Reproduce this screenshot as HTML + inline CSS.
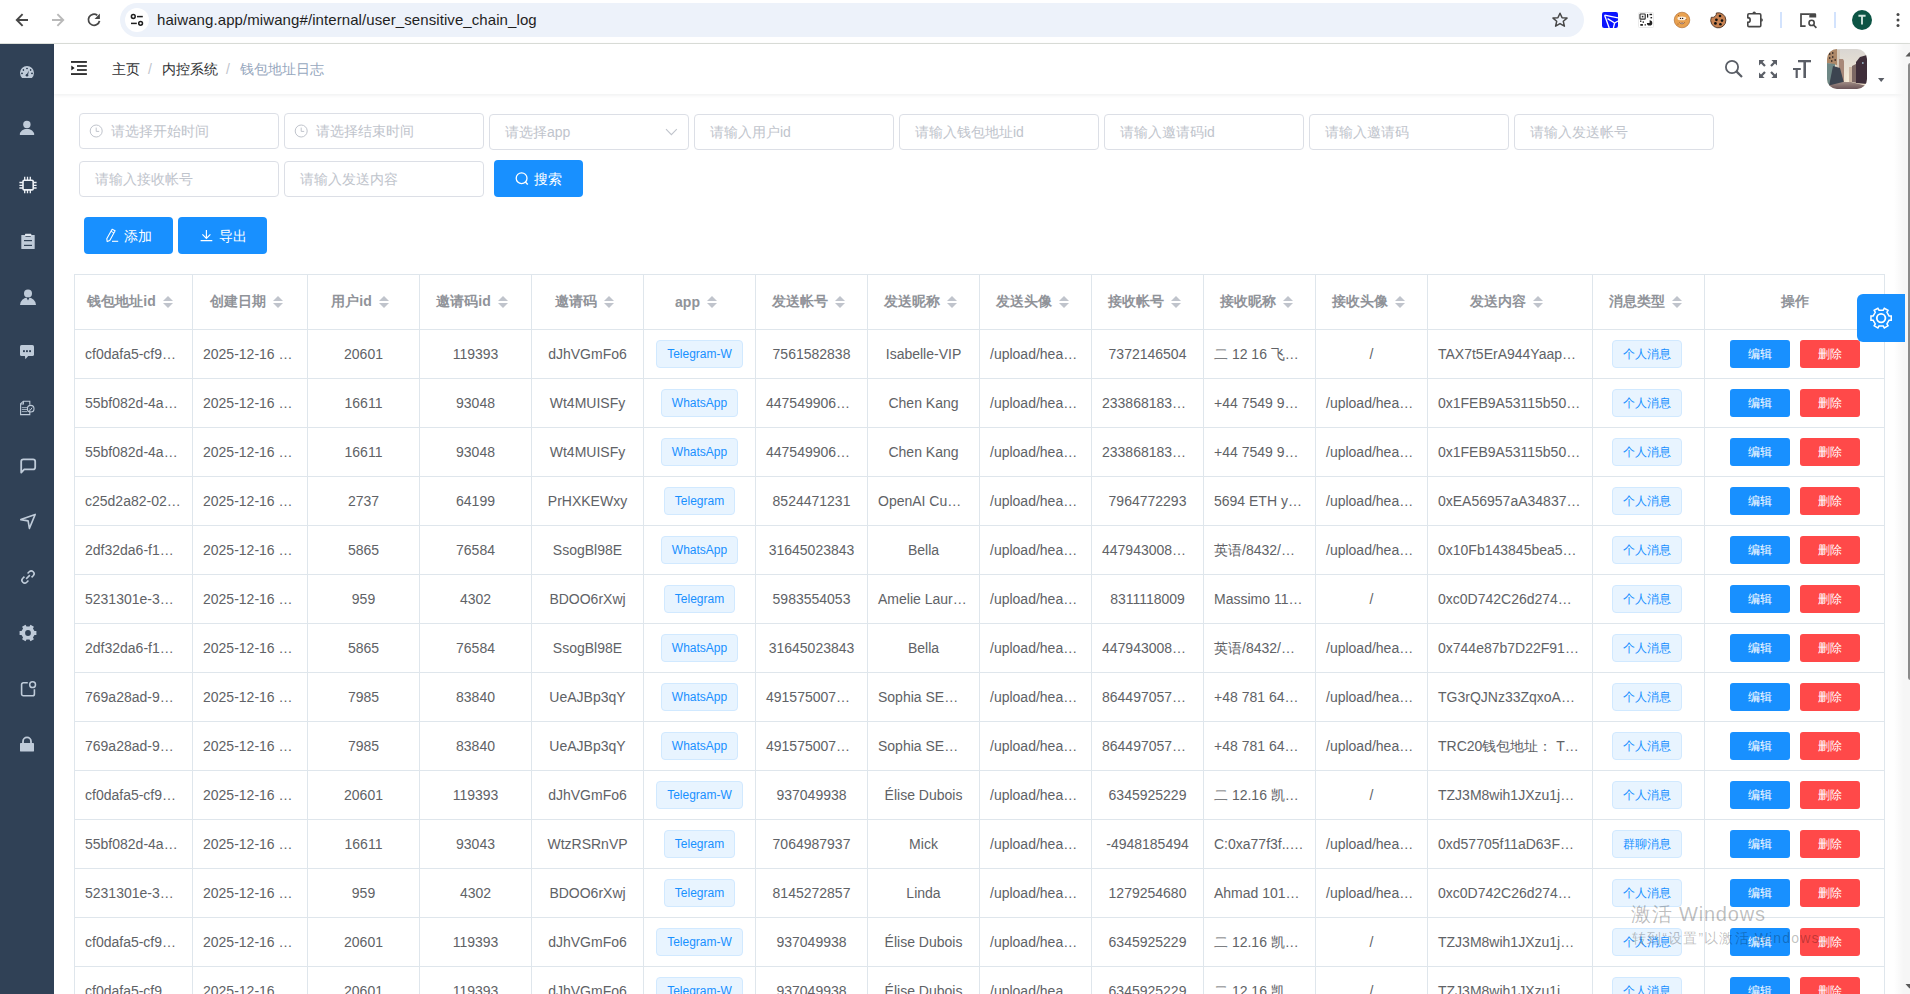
<!DOCTYPE html>
<html><head><meta charset="utf-8">
<style>
*{box-sizing:border-box;margin:0;padding:0}
html,body{width:1910px;height:994px;overflow:hidden;background:#fff}
body{position:relative;font-family:"Liberation Sans",sans-serif;color:#606266;font-size:14px}
.abs{position:absolute}
/* browser chrome */
#chrome{position:absolute;left:0;top:0;width:1910px;height:44px;background:#fff;border-bottom:1px solid #dcdfda}
#omni{position:absolute;left:120px;top:3px;width:1464px;height:34px;border-radius:17px;background:#edf2fa}
#siteic{position:absolute;left:125px;top:8px;width:24px;height:24px;border-radius:12px;background:#fff}
#url{position:absolute;left:157px;top:10px;font-size:15px;color:#1f1f1f;white-space:nowrap;line-height:20px;letter-spacing:0.085px}
/* sidebar */
#side{position:absolute;left:0;top:44px;width:54px;height:950px;background:#304156}
.sic{position:absolute;left:19px;width:16px;height:16px}
/* navbar */
#nav{position:absolute;left:54px;top:44px;width:1856px;height:50px;background:#fff;box-shadow:0 1px 4px rgba(0,21,41,.08)}
.bc{position:absolute;top:60px;font-size:14px;line-height:18px;white-space:nowrap}
/* form */
.inp{position:absolute;width:200px;height:36px;border:1px solid #dcdfe6;border-radius:4px;background:#fff;font-size:14px;font-weight:500;color:#c0c4cc;line-height:34px;padding-left:15px;white-space:nowrap}
.btn{position:absolute;height:36px;background:#1890ff;border-radius:4px;color:#fff;font-size:14px;line-height:36px;white-space:nowrap}
/* table */
.vl{position:absolute;width:1px;background:#dfe6ec}
.hl{position:absolute;height:1px;background:#dfe6ec}
.th{position:absolute;display:flex;align-items:center;justify-content:center;font-weight:bold;color:#909399;font-size:14px;white-space:nowrap;overflow:hidden}
.td{position:absolute;display:flex;align-items:center;justify-content:center;font-size:14px;line-height:23px;color:#606266;white-space:nowrap;overflow:hidden;padding:0 10px}
.td.tl{justify-content:flex-start}
.wm{position:absolute;color:rgba(0,0,0,.26);white-space:nowrap;pointer-events:none}
#avatar{position:absolute;left:1827px;top:49px;width:40px;height:40px;border-radius:10px;overflow:hidden}
.caret{display:inline-block;position:relative;width:24px;height:20px;vertical-align:middle}
.caret i{position:absolute;left:7px;width:0;height:0;border:5px solid transparent}
.caret i.up{top:-1px;border-bottom-color:#c0c4cc}
.caret i.dn{top:11px;border-top-color:#c0c4cc}
.tag{display:inline-block;height:28px;line-height:26px;padding:0 10px;font-size:12px;color:#1890ff;background:#e8f4ff;border:1px solid #d1e9ff;border-radius:4px}
.bt{display:inline-block;width:60px;height:28px;line-height:29px;text-align:center;font-size:12px;font-weight:500;color:#fff;border-radius:3px}
.bl{background:#1890ff;margin-right:10px}
.br{background:#ff4949}
#gear{position:absolute;left:1857px;top:294px;width:48px;height:48px;background:#1890ff;border-radius:6px 0 0 6px}
#track{position:absolute;left:1894px;top:44px;width:16px;height:950px;background:linear-gradient(90deg,rgba(248,248,248,0),#f6f6f6 60%)}
#thumb{position:absolute;left:1908px;top:63px;width:5px;height:617px;background:#8a8a8a;border-radius:3px}
</style></head><body>

<div id="chrome">
  <div id="omni"></div>
  <div id="siteic"></div>
  <div id="url">haiwang.app/miwang#/internal/user_sensitive_chain_log</div>
</div>

<div id="side"></div>

<div id="nav"></div>
<div class="bc" style="left:112px;color:#303133">主页</div>
<div class="bc" style="left:148px;color:#c0c4cc">/</div>
<div class="bc" style="left:162px;color:#303133">内控系统</div>
<div class="bc" style="left:226px;color:#c0c4cc">/</div>
<div class="bc" style="left:240px;color:#97a8be">钱包地址日志</div>

<div class="inp" style="left:79px;top:113px;padding-left:31px">请选择开始时间</div>
<div class="inp" style="left:284px;top:113px;padding-left:31px">请选择结束时间</div>
<div class="inp" style="left:489px;top:114px">请选择app</div>
<div class="inp" style="left:694px;top:114px">请输入用户id</div>
<div class="inp" style="left:899px;top:114px">请输入钱包地址id</div>
<div class="inp" style="left:1104px;top:114px">请输入邀请码id</div>
<div class="inp" style="left:1309px;top:114px">请输入邀请码</div>
<div class="inp" style="left:1514px;top:114px">请输入发送帐号</div>
<div class="inp" style="left:79px;top:161px">请输入接收帐号</div>
<div class="inp" style="left:284px;top:161px">请输入发送内容</div>
<div class="btn" style="left:494px;top:160px;height:37px;line-height:36px;padding-top:1px;width:89px;padding-left:40px">搜索</div>
<div class="btn" style="left:84px;top:217px;height:37px;line-height:36px;padding-top:1px;width:89px;padding-left:40px">添加</div>
<div class="btn" style="left:178px;top:217px;height:37px;line-height:36px;padding-top:1px;width:89px;padding-left:41px">导出</div>

<div class="vl" style="left:74px;top:274px;height:720px"></div>
<div class="vl" style="left:192px;top:274px;height:720px"></div>
<div class="vl" style="left:307px;top:274px;height:720px"></div>
<div class="vl" style="left:419px;top:274px;height:720px"></div>
<div class="vl" style="left:531px;top:274px;height:720px"></div>
<div class="vl" style="left:643px;top:274px;height:720px"></div>
<div class="vl" style="left:755px;top:274px;height:720px"></div>
<div class="vl" style="left:867px;top:274px;height:720px"></div>
<div class="vl" style="left:979px;top:274px;height:720px"></div>
<div class="vl" style="left:1091px;top:274px;height:720px"></div>
<div class="vl" style="left:1203px;top:274px;height:720px"></div>
<div class="vl" style="left:1315px;top:274px;height:720px"></div>
<div class="vl" style="left:1427px;top:274px;height:720px"></div>
<div class="vl" style="left:1592px;top:274px;height:720px"></div>
<div class="vl" style="left:1704px;top:274px;height:720px"></div>
<div class="vl" style="left:1884px;top:274px;height:720px"></div>
<div class="hl" style="left:74px;top:274px;width:1811px"></div>
<div class="hl" style="left:74px;top:329px;width:1811px"></div>
<div class="hl" style="left:74px;top:378px;width:1811px"></div>
<div class="hl" style="left:74px;top:427px;width:1811px"></div>
<div class="hl" style="left:74px;top:476px;width:1811px"></div>
<div class="hl" style="left:74px;top:525px;width:1811px"></div>
<div class="hl" style="left:74px;top:574px;width:1811px"></div>
<div class="hl" style="left:74px;top:623px;width:1811px"></div>
<div class="hl" style="left:74px;top:672px;width:1811px"></div>
<div class="hl" style="left:74px;top:721px;width:1811px"></div>
<div class="hl" style="left:74px;top:770px;width:1811px"></div>
<div class="hl" style="left:74px;top:819px;width:1811px"></div>
<div class="hl" style="left:74px;top:868px;width:1811px"></div>
<div class="hl" style="left:74px;top:917px;width:1811px"></div>
<div class="hl" style="left:74px;top:966px;width:1811px"></div>
<div class="th" style="left:75px;top:275px;width:117px;height:54px">钱包地址id<span class="caret"><i class="up"></i><i class="dn"></i></span></div>
<div class="th" style="left:193px;top:275px;width:114px;height:54px">创建日期<span class="caret"><i class="up"></i><i class="dn"></i></span></div>
<div class="th" style="left:308px;top:275px;width:111px;height:54px">用户id<span class="caret"><i class="up"></i><i class="dn"></i></span></div>
<div class="th" style="left:420px;top:275px;width:111px;height:54px">邀请码id<span class="caret"><i class="up"></i><i class="dn"></i></span></div>
<div class="th" style="left:532px;top:275px;width:111px;height:54px">邀请码<span class="caret"><i class="up"></i><i class="dn"></i></span></div>
<div class="th" style="left:644px;top:275px;width:111px;height:54px">app<span class="caret"><i class="up"></i><i class="dn"></i></span></div>
<div class="th" style="left:756px;top:275px;width:111px;height:54px">发送帐号<span class="caret"><i class="up"></i><i class="dn"></i></span></div>
<div class="th" style="left:868px;top:275px;width:111px;height:54px">发送昵称<span class="caret"><i class="up"></i><i class="dn"></i></span></div>
<div class="th" style="left:980px;top:275px;width:111px;height:54px">发送头像<span class="caret"><i class="up"></i><i class="dn"></i></span></div>
<div class="th" style="left:1092px;top:275px;width:111px;height:54px">接收帐号<span class="caret"><i class="up"></i><i class="dn"></i></span></div>
<div class="th" style="left:1204px;top:275px;width:111px;height:54px">接收昵称<span class="caret"><i class="up"></i><i class="dn"></i></span></div>
<div class="th" style="left:1316px;top:275px;width:111px;height:54px">接收头像<span class="caret"><i class="up"></i><i class="dn"></i></span></div>
<div class="th" style="left:1428px;top:275px;width:164px;height:54px">发送内容<span class="caret"><i class="up"></i><i class="dn"></i></span></div>
<div class="th" style="left:1593px;top:275px;width:111px;height:54px">消息类型<span class="caret"><i class="up"></i><i class="dn"></i></span></div>
<div class="th" style="left:1705px;top:275px;width:179px;height:54px">操作</div>
<div class="td tl" style="left:75px;top:330px;width:117px;height:48px">cf0dafa5-cf9…</div>
<div class="td tl" style="left:193px;top:330px;width:114px;height:48px">2025-12-16 …</div>
<div class="td" style="left:308px;top:330px;width:111px;height:48px">20601</div>
<div class="td" style="left:420px;top:330px;width:111px;height:48px">119393</div>
<div class="td" style="left:532px;top:330px;width:111px;height:48px">dJhVGmFo6</div>
<div class="td" style="left:644px;top:330px;width:111px;height:48px"><span class="tag">Telegram-W</span></div>
<div class="td" style="left:756px;top:330px;width:111px;height:48px">7561582838</div>
<div class="td" style="left:868px;top:330px;width:111px;height:48px">Isabelle-VIP</div>
<div class="td tl" style="left:980px;top:330px;width:111px;height:48px">/upload/hea…</div>
<div class="td" style="left:1092px;top:330px;width:111px;height:48px">7372146504</div>
<div class="td tl" style="left:1204px;top:330px;width:111px;height:48px">二 12 16 飞…</div>
<div class="td" style="left:1316px;top:330px;width:111px;height:48px">/</div>
<div class="td tl" style="left:1428px;top:330px;width:164px;height:48px">TAX7t5ErA944Yaap…</div>
<div class="td" style="left:1593px;top:330px;width:111px;height:48px"><span class="tag" style="margin-right:3px">个人消息</span></div>
<div class="td" style="left:1705px;top:330px;width:179px;height:48px"><span class="bt bl">编辑</span><span class="bt br">删除</span></div>
<div class="td tl" style="left:75px;top:379px;width:117px;height:48px">55bf082d-4a…</div>
<div class="td tl" style="left:193px;top:379px;width:114px;height:48px">2025-12-16 …</div>
<div class="td" style="left:308px;top:379px;width:111px;height:48px">16611</div>
<div class="td" style="left:420px;top:379px;width:111px;height:48px">93048</div>
<div class="td" style="left:532px;top:379px;width:111px;height:48px">Wt4MUISFy</div>
<div class="td" style="left:644px;top:379px;width:111px;height:48px"><span class="tag">WhatsApp</span></div>
<div class="td tl" style="left:756px;top:379px;width:111px;height:48px">447549906…</div>
<div class="td" style="left:868px;top:379px;width:111px;height:48px">Chen Kang</div>
<div class="td tl" style="left:980px;top:379px;width:111px;height:48px">/upload/hea…</div>
<div class="td tl" style="left:1092px;top:379px;width:111px;height:48px">233868183…</div>
<div class="td tl" style="left:1204px;top:379px;width:111px;height:48px">+44 7549 9…</div>
<div class="td tl" style="left:1316px;top:379px;width:111px;height:48px">/upload/hea…</div>
<div class="td tl" style="left:1428px;top:379px;width:164px;height:48px">0x1FEB9A53115b50…</div>
<div class="td" style="left:1593px;top:379px;width:111px;height:48px"><span class="tag" style="margin-right:3px">个人消息</span></div>
<div class="td" style="left:1705px;top:379px;width:179px;height:48px"><span class="bt bl">编辑</span><span class="bt br">删除</span></div>
<div class="td tl" style="left:75px;top:428px;width:117px;height:48px">55bf082d-4a…</div>
<div class="td tl" style="left:193px;top:428px;width:114px;height:48px">2025-12-16 …</div>
<div class="td" style="left:308px;top:428px;width:111px;height:48px">16611</div>
<div class="td" style="left:420px;top:428px;width:111px;height:48px">93048</div>
<div class="td" style="left:532px;top:428px;width:111px;height:48px">Wt4MUISFy</div>
<div class="td" style="left:644px;top:428px;width:111px;height:48px"><span class="tag">WhatsApp</span></div>
<div class="td tl" style="left:756px;top:428px;width:111px;height:48px">447549906…</div>
<div class="td" style="left:868px;top:428px;width:111px;height:48px">Chen Kang</div>
<div class="td tl" style="left:980px;top:428px;width:111px;height:48px">/upload/hea…</div>
<div class="td tl" style="left:1092px;top:428px;width:111px;height:48px">233868183…</div>
<div class="td tl" style="left:1204px;top:428px;width:111px;height:48px">+44 7549 9…</div>
<div class="td tl" style="left:1316px;top:428px;width:111px;height:48px">/upload/hea…</div>
<div class="td tl" style="left:1428px;top:428px;width:164px;height:48px">0x1FEB9A53115b50…</div>
<div class="td" style="left:1593px;top:428px;width:111px;height:48px"><span class="tag" style="margin-right:3px">个人消息</span></div>
<div class="td" style="left:1705px;top:428px;width:179px;height:48px"><span class="bt bl">编辑</span><span class="bt br">删除</span></div>
<div class="td tl" style="left:75px;top:477px;width:117px;height:48px">c25d2a82-02…</div>
<div class="td tl" style="left:193px;top:477px;width:114px;height:48px">2025-12-16 …</div>
<div class="td" style="left:308px;top:477px;width:111px;height:48px">2737</div>
<div class="td" style="left:420px;top:477px;width:111px;height:48px">64199</div>
<div class="td" style="left:532px;top:477px;width:111px;height:48px">PrHXKEWxy</div>
<div class="td" style="left:644px;top:477px;width:111px;height:48px"><span class="tag">Telegram</span></div>
<div class="td" style="left:756px;top:477px;width:111px;height:48px">8524471231</div>
<div class="td tl" style="left:868px;top:477px;width:111px;height:48px">OpenAI Cu…</div>
<div class="td tl" style="left:980px;top:477px;width:111px;height:48px">/upload/hea…</div>
<div class="td" style="left:1092px;top:477px;width:111px;height:48px">7964772293</div>
<div class="td tl" style="left:1204px;top:477px;width:111px;height:48px">5694 ETH y…</div>
<div class="td tl" style="left:1316px;top:477px;width:111px;height:48px">/upload/hea…</div>
<div class="td tl" style="left:1428px;top:477px;width:164px;height:48px">0xEA56957aA34837…</div>
<div class="td" style="left:1593px;top:477px;width:111px;height:48px"><span class="tag" style="margin-right:3px">个人消息</span></div>
<div class="td" style="left:1705px;top:477px;width:179px;height:48px"><span class="bt bl">编辑</span><span class="bt br">删除</span></div>
<div class="td tl" style="left:75px;top:526px;width:117px;height:48px">2df32da6-f1…</div>
<div class="td tl" style="left:193px;top:526px;width:114px;height:48px">2025-12-16 …</div>
<div class="td" style="left:308px;top:526px;width:111px;height:48px">5865</div>
<div class="td" style="left:420px;top:526px;width:111px;height:48px">76584</div>
<div class="td" style="left:532px;top:526px;width:111px;height:48px">SsogBl98E</div>
<div class="td" style="left:644px;top:526px;width:111px;height:48px"><span class="tag">WhatsApp</span></div>
<div class="td" style="left:756px;top:526px;width:111px;height:48px">31645023843</div>
<div class="td" style="left:868px;top:526px;width:111px;height:48px">Bella</div>
<div class="td tl" style="left:980px;top:526px;width:111px;height:48px">/upload/hea…</div>
<div class="td tl" style="left:1092px;top:526px;width:111px;height:48px">447943008…</div>
<div class="td tl" style="left:1204px;top:526px;width:111px;height:48px">英语/8432/…</div>
<div class="td tl" style="left:1316px;top:526px;width:111px;height:48px">/upload/hea…</div>
<div class="td tl" style="left:1428px;top:526px;width:164px;height:48px">0x10Fb143845bea5…</div>
<div class="td" style="left:1593px;top:526px;width:111px;height:48px"><span class="tag" style="margin-right:3px">个人消息</span></div>
<div class="td" style="left:1705px;top:526px;width:179px;height:48px"><span class="bt bl">编辑</span><span class="bt br">删除</span></div>
<div class="td tl" style="left:75px;top:575px;width:117px;height:48px">5231301e-3…</div>
<div class="td tl" style="left:193px;top:575px;width:114px;height:48px">2025-12-16 …</div>
<div class="td" style="left:308px;top:575px;width:111px;height:48px">959</div>
<div class="td" style="left:420px;top:575px;width:111px;height:48px">4302</div>
<div class="td" style="left:532px;top:575px;width:111px;height:48px">BDOO6rXwj</div>
<div class="td" style="left:644px;top:575px;width:111px;height:48px"><span class="tag">Telegram</span></div>
<div class="td" style="left:756px;top:575px;width:111px;height:48px">5983554053</div>
<div class="td tl" style="left:868px;top:575px;width:111px;height:48px">Amelie Laur…</div>
<div class="td tl" style="left:980px;top:575px;width:111px;height:48px">/upload/hea…</div>
<div class="td" style="left:1092px;top:575px;width:111px;height:48px">8311118009</div>
<div class="td tl" style="left:1204px;top:575px;width:111px;height:48px">Massimo 11…</div>
<div class="td" style="left:1316px;top:575px;width:111px;height:48px">/</div>
<div class="td tl" style="left:1428px;top:575px;width:164px;height:48px">0xc0D742C26d274…</div>
<div class="td" style="left:1593px;top:575px;width:111px;height:48px"><span class="tag" style="margin-right:3px">个人消息</span></div>
<div class="td" style="left:1705px;top:575px;width:179px;height:48px"><span class="bt bl">编辑</span><span class="bt br">删除</span></div>
<div class="td tl" style="left:75px;top:624px;width:117px;height:48px">2df32da6-f1…</div>
<div class="td tl" style="left:193px;top:624px;width:114px;height:48px">2025-12-16 …</div>
<div class="td" style="left:308px;top:624px;width:111px;height:48px">5865</div>
<div class="td" style="left:420px;top:624px;width:111px;height:48px">76584</div>
<div class="td" style="left:532px;top:624px;width:111px;height:48px">SsogBl98E</div>
<div class="td" style="left:644px;top:624px;width:111px;height:48px"><span class="tag">WhatsApp</span></div>
<div class="td" style="left:756px;top:624px;width:111px;height:48px">31645023843</div>
<div class="td" style="left:868px;top:624px;width:111px;height:48px">Bella</div>
<div class="td tl" style="left:980px;top:624px;width:111px;height:48px">/upload/hea…</div>
<div class="td tl" style="left:1092px;top:624px;width:111px;height:48px">447943008…</div>
<div class="td tl" style="left:1204px;top:624px;width:111px;height:48px">英语/8432/…</div>
<div class="td tl" style="left:1316px;top:624px;width:111px;height:48px">/upload/hea…</div>
<div class="td tl" style="left:1428px;top:624px;width:164px;height:48px">0x744e87b7D22F91…</div>
<div class="td" style="left:1593px;top:624px;width:111px;height:48px"><span class="tag" style="margin-right:3px">个人消息</span></div>
<div class="td" style="left:1705px;top:624px;width:179px;height:48px"><span class="bt bl">编辑</span><span class="bt br">删除</span></div>
<div class="td tl" style="left:75px;top:673px;width:117px;height:48px">769a28ad-9…</div>
<div class="td tl" style="left:193px;top:673px;width:114px;height:48px">2025-12-16 …</div>
<div class="td" style="left:308px;top:673px;width:111px;height:48px">7985</div>
<div class="td" style="left:420px;top:673px;width:111px;height:48px">83840</div>
<div class="td" style="left:532px;top:673px;width:111px;height:48px">UeAJBp3qY</div>
<div class="td" style="left:644px;top:673px;width:111px;height:48px"><span class="tag">WhatsApp</span></div>
<div class="td tl" style="left:756px;top:673px;width:111px;height:48px">491575007…</div>
<div class="td tl" style="left:868px;top:673px;width:111px;height:48px">Sophia SE…</div>
<div class="td tl" style="left:980px;top:673px;width:111px;height:48px">/upload/hea…</div>
<div class="td tl" style="left:1092px;top:673px;width:111px;height:48px">864497057…</div>
<div class="td tl" style="left:1204px;top:673px;width:111px;height:48px">+48 781 64…</div>
<div class="td tl" style="left:1316px;top:673px;width:111px;height:48px">/upload/hea…</div>
<div class="td tl" style="left:1428px;top:673px;width:164px;height:48px">TG3rQJNz33ZqxoA…</div>
<div class="td" style="left:1593px;top:673px;width:111px;height:48px"><span class="tag" style="margin-right:3px">个人消息</span></div>
<div class="td" style="left:1705px;top:673px;width:179px;height:48px"><span class="bt bl">编辑</span><span class="bt br">删除</span></div>
<div class="td tl" style="left:75px;top:722px;width:117px;height:48px">769a28ad-9…</div>
<div class="td tl" style="left:193px;top:722px;width:114px;height:48px">2025-12-16 …</div>
<div class="td" style="left:308px;top:722px;width:111px;height:48px">7985</div>
<div class="td" style="left:420px;top:722px;width:111px;height:48px">83840</div>
<div class="td" style="left:532px;top:722px;width:111px;height:48px">UeAJBp3qY</div>
<div class="td" style="left:644px;top:722px;width:111px;height:48px"><span class="tag">WhatsApp</span></div>
<div class="td tl" style="left:756px;top:722px;width:111px;height:48px">491575007…</div>
<div class="td tl" style="left:868px;top:722px;width:111px;height:48px">Sophia SE…</div>
<div class="td tl" style="left:980px;top:722px;width:111px;height:48px">/upload/hea…</div>
<div class="td tl" style="left:1092px;top:722px;width:111px;height:48px">864497057…</div>
<div class="td tl" style="left:1204px;top:722px;width:111px;height:48px">+48 781 64…</div>
<div class="td tl" style="left:1316px;top:722px;width:111px;height:48px">/upload/hea…</div>
<div class="td tl" style="left:1428px;top:722px;width:164px;height:48px">TRC20钱包地址： T…</div>
<div class="td" style="left:1593px;top:722px;width:111px;height:48px"><span class="tag" style="margin-right:3px">个人消息</span></div>
<div class="td" style="left:1705px;top:722px;width:179px;height:48px"><span class="bt bl">编辑</span><span class="bt br">删除</span></div>
<div class="td tl" style="left:75px;top:771px;width:117px;height:48px">cf0dafa5-cf9…</div>
<div class="td tl" style="left:193px;top:771px;width:114px;height:48px">2025-12-16 …</div>
<div class="td" style="left:308px;top:771px;width:111px;height:48px">20601</div>
<div class="td" style="left:420px;top:771px;width:111px;height:48px">119393</div>
<div class="td" style="left:532px;top:771px;width:111px;height:48px">dJhVGmFo6</div>
<div class="td" style="left:644px;top:771px;width:111px;height:48px"><span class="tag">Telegram-W</span></div>
<div class="td" style="left:756px;top:771px;width:111px;height:48px">937049938</div>
<div class="td" style="left:868px;top:771px;width:111px;height:48px">Élise Dubois</div>
<div class="td tl" style="left:980px;top:771px;width:111px;height:48px">/upload/hea…</div>
<div class="td" style="left:1092px;top:771px;width:111px;height:48px">6345925229</div>
<div class="td tl" style="left:1204px;top:771px;width:111px;height:48px">二 12.16 凯…</div>
<div class="td" style="left:1316px;top:771px;width:111px;height:48px">/</div>
<div class="td tl" style="left:1428px;top:771px;width:164px;height:48px">TZJ3M8wih1JXzu1j…</div>
<div class="td" style="left:1593px;top:771px;width:111px;height:48px"><span class="tag" style="margin-right:3px">个人消息</span></div>
<div class="td" style="left:1705px;top:771px;width:179px;height:48px"><span class="bt bl">编辑</span><span class="bt br">删除</span></div>
<div class="td tl" style="left:75px;top:820px;width:117px;height:48px">55bf082d-4a…</div>
<div class="td tl" style="left:193px;top:820px;width:114px;height:48px">2025-12-16 …</div>
<div class="td" style="left:308px;top:820px;width:111px;height:48px">16611</div>
<div class="td" style="left:420px;top:820px;width:111px;height:48px">93043</div>
<div class="td" style="left:532px;top:820px;width:111px;height:48px">WtzRSRnVP</div>
<div class="td" style="left:644px;top:820px;width:111px;height:48px"><span class="tag">Telegram</span></div>
<div class="td" style="left:756px;top:820px;width:111px;height:48px">7064987937</div>
<div class="td" style="left:868px;top:820px;width:111px;height:48px">Mick</div>
<div class="td tl" style="left:980px;top:820px;width:111px;height:48px">/upload/hea…</div>
<div class="td" style="left:1092px;top:820px;width:111px;height:48px">-4948185494</div>
<div class="td tl" style="left:1204px;top:820px;width:111px;height:48px">C:0xa77f3f..…</div>
<div class="td tl" style="left:1316px;top:820px;width:111px;height:48px">/upload/hea…</div>
<div class="td tl" style="left:1428px;top:820px;width:164px;height:48px">0xd57705f11aD63F…</div>
<div class="td" style="left:1593px;top:820px;width:111px;height:48px"><span class="tag" style="margin-right:3px">群聊消息</span></div>
<div class="td" style="left:1705px;top:820px;width:179px;height:48px"><span class="bt bl">编辑</span><span class="bt br">删除</span></div>
<div class="td tl" style="left:75px;top:869px;width:117px;height:48px">5231301e-3…</div>
<div class="td tl" style="left:193px;top:869px;width:114px;height:48px">2025-12-16 …</div>
<div class="td" style="left:308px;top:869px;width:111px;height:48px">959</div>
<div class="td" style="left:420px;top:869px;width:111px;height:48px">4302</div>
<div class="td" style="left:532px;top:869px;width:111px;height:48px">BDOO6rXwj</div>
<div class="td" style="left:644px;top:869px;width:111px;height:48px"><span class="tag">Telegram</span></div>
<div class="td" style="left:756px;top:869px;width:111px;height:48px">8145272857</div>
<div class="td" style="left:868px;top:869px;width:111px;height:48px">Linda</div>
<div class="td tl" style="left:980px;top:869px;width:111px;height:48px">/upload/hea…</div>
<div class="td" style="left:1092px;top:869px;width:111px;height:48px">1279254680</div>
<div class="td tl" style="left:1204px;top:869px;width:111px;height:48px">Ahmad 101…</div>
<div class="td tl" style="left:1316px;top:869px;width:111px;height:48px">/upload/hea…</div>
<div class="td tl" style="left:1428px;top:869px;width:164px;height:48px">0xc0D742C26d274…</div>
<div class="td" style="left:1593px;top:869px;width:111px;height:48px"><span class="tag" style="margin-right:3px">个人消息</span></div>
<div class="td" style="left:1705px;top:869px;width:179px;height:48px"><span class="bt bl">编辑</span><span class="bt br">删除</span></div>
<div class="td tl" style="left:75px;top:918px;width:117px;height:48px">cf0dafa5-cf9…</div>
<div class="td tl" style="left:193px;top:918px;width:114px;height:48px">2025-12-16 …</div>
<div class="td" style="left:308px;top:918px;width:111px;height:48px">20601</div>
<div class="td" style="left:420px;top:918px;width:111px;height:48px">119393</div>
<div class="td" style="left:532px;top:918px;width:111px;height:48px">dJhVGmFo6</div>
<div class="td" style="left:644px;top:918px;width:111px;height:48px"><span class="tag">Telegram-W</span></div>
<div class="td" style="left:756px;top:918px;width:111px;height:48px">937049938</div>
<div class="td" style="left:868px;top:918px;width:111px;height:48px">Élise Dubois</div>
<div class="td tl" style="left:980px;top:918px;width:111px;height:48px">/upload/hea…</div>
<div class="td" style="left:1092px;top:918px;width:111px;height:48px">6345925229</div>
<div class="td tl" style="left:1204px;top:918px;width:111px;height:48px">二 12.16 凯…</div>
<div class="td" style="left:1316px;top:918px;width:111px;height:48px">/</div>
<div class="td tl" style="left:1428px;top:918px;width:164px;height:48px">TZJ3M8wih1JXzu1j…</div>
<div class="td" style="left:1593px;top:918px;width:111px;height:48px"><span class="tag" style="margin-right:3px">个人消息</span></div>
<div class="td" style="left:1705px;top:918px;width:179px;height:48px"><span class="bt bl">编辑</span><span class="bt br">删除</span></div>
<div class="td tl" style="left:75px;top:967px;width:117px;height:48px">cf0dafa5-cf9…</div>
<div class="td tl" style="left:193px;top:967px;width:114px;height:48px">2025-12-16 …</div>
<div class="td" style="left:308px;top:967px;width:111px;height:48px">20601</div>
<div class="td" style="left:420px;top:967px;width:111px;height:48px">119393</div>
<div class="td" style="left:532px;top:967px;width:111px;height:48px">dJhVGmFo6</div>
<div class="td" style="left:644px;top:967px;width:111px;height:48px"><span class="tag">Telegram-W</span></div>
<div class="td" style="left:756px;top:967px;width:111px;height:48px">937049938</div>
<div class="td" style="left:868px;top:967px;width:111px;height:48px">Élise Dubois</div>
<div class="td tl" style="left:980px;top:967px;width:111px;height:48px">/upload/hea…</div>
<div class="td" style="left:1092px;top:967px;width:111px;height:48px">6345925229</div>
<div class="td tl" style="left:1204px;top:967px;width:111px;height:48px">二 12.16 凯…</div>
<div class="td" style="left:1316px;top:967px;width:111px;height:48px">/</div>
<div class="td tl" style="left:1428px;top:967px;width:164px;height:48px">TZJ3M8wih1JXzu1j…</div>
<div class="td" style="left:1593px;top:967px;width:111px;height:48px"><span class="tag" style="margin-right:3px">个人消息</span></div>
<div class="td" style="left:1705px;top:967px;width:179px;height:48px"><span class="bt bl">编辑</span><span class="bt br">删除</span></div>

<div id="track"></div>
<div id="thumb"></div>
<div id="gear"></div>
<div id="avatar"><svg width="40" height="40" viewBox="0 0 40 40">
<defs><linearGradient id="sky" x1="0" y1="0" x2="0" y2="1"><stop offset="0" stop-color="#d9d6d2"/><stop offset=".7" stop-color="#efe5d4"/><stop offset="1" stop-color="#e8d8c0"/></linearGradient>
<linearGradient id="road" x1="0" y1="0" x2="0" y2="1"><stop offset="0" stop-color="#a08c84"/><stop offset="1" stop-color="#6a5458"/></linearGradient></defs>
<rect width="40" height="40" fill="url(#sky)"/>
<path d="M9 1H13V22H9Z" fill="#d6cabb"/>
<path d="M0 2L6 0H10V16L0 14Z" fill="#ad8868"/>
<g fill="#4a3a30"><rect x="2" y="4" width="1.4" height="2"/><rect x="5" y="3" width="1.4" height="2"/><rect x="2" y="8" width="1.4" height="2"/><rect x="5" y="7" width="1.4" height="2"/><rect x="7.5" y="10" width="1.4" height="2"/><rect x="4" y="11" width="1.4" height="2"/></g>
<path d="M12 10H16L17 12V34H12Z" fill="#a88878"/>
<path d="M0 14L8 15V35L0 37Z" fill="#6f8886"/>
<path d="M6 17L13 19L17 34L2 37Z" fill="#3c4450"/>
<path d="M22 18H26V33H22Z" fill="#cdb7a4"/>
<path d="M25 17L31 14V34L25 33Z" fill="#7c6864"/>
<path d="M29 13L33 8L40 6V35L29 34Z" fill="#3f2e3a"/>
<rect x="35" y="13" width="1.6" height="2" fill="#8aa0b0"/>
<path d="M0 37L16 33H24L40 37V40H0Z" fill="url(#road)"/>
<path d="M19 33L21 22L22 33Z" fill="#f4ead6"/>
</svg></div>
<div class="wm" style="left:1631px;top:901px;font-size:20px;line-height:26px;letter-spacing:0.8px">激活 Windows</div>
<div class="wm" style="left:1632px;top:929px;font-size:14px;line-height:18px;letter-spacing:1.15px">转到“设置”以激活 Windows。</div>
<svg id="ov" width="1910" height="994" viewBox="0 0 1910 994" style="position:absolute;left:0;top:0;pointer-events:none">
<!-- chrome nav -->
<g fill="none" stroke-width="1.9" stroke-linecap="butt">
 <path d="M28 20H17.5M22.6 14.2L16.8 20L22.6 25.8" stroke="#474747"/>
 <path d="M52 20H62.5M57.4 14.2L63.2 20L57.4 25.8" stroke="#b9b9b9"/>
 <path d="M99.5 20.8A5.6 5.6 0 1 1 97.3 15.2" stroke="#474747" stroke-width="1.8"/>
</g>
<path d="M99.9 13.6V18.9H94.6Z" fill="#474747"/>
<!-- site info tune -->
<g fill="none" stroke="#1f1f1f" stroke-width="1.5">
 <circle cx="133.3" cy="16.5" r="1.9"/>
 <path d="M137 16.6H142.8"/>
 <path d="M131 23.4H136.8"/>
 <circle cx="140.6" cy="23.3" r="1.9"/>
</g>
<!-- star -->
<path d="M1560 13.2L1562.1 17.7L1567 18.1L1563.3 21.3L1564.4 26.2L1560 23.6L1555.6 26.2L1556.7 21.3L1553 18.1L1557.9 17.7Z" fill="none" stroke="#474747" stroke-width="1.5" stroke-linejoin="round"/>
<!-- blue ext -->
<rect x="1602" y="12" width="16" height="16" rx="2.2" fill="#0a14ff"/>
<g stroke="#fff" stroke-width="1.3" fill="none">
 <path d="M1604.6 15.2L1618 17.8"/>
 <path d="M1604.6 15.2L1609.2 28"/>
 <path d="M1607.6 18.6L1614.6 23"/>
 <path d="M1614.6 23L1613.4 28"/>
 <path d="M1614.6 23L1618 21"/>
</g>
<!-- qr ext -->
<rect x="1638.5" y="12.5" width="15" height="15" rx="1" fill="#fff" stroke="#e4e4e4" stroke-width="0.8"/>
<g fill="#222">
 <rect x="1640" y="14" width="5.2" height="5.2" rx="0.6" fill="none" stroke="#333" stroke-width="1.2"/>
 <rect x="1641.8" y="15.8" width="1.6" height="1.6"/>
 <rect x="1647" y="14" width="1.2" height="3.6"/>
 <rect x="1649.5" y="13.8" width="2.6" height="1.4"/>
 <rect x="1650.5" y="17" width="1.6" height="1.4"/>
 <rect x="1640" y="20.5" width="1.4" height="1.4"/>
 <rect x="1642.6" y="21.4" width="1.4" height="1.4"/>
 <rect x="1640.3" y="24" width="2.6" height="1.8"/>
 <rect x="1644.6" y="24.2" width="1.3" height="1.3"/>
 <path d="M1649.6 22.9L1649.6 20.2A2.7 2.7 0 1 1 1646.9 22.9Z"/>
</g>
<!-- cookie face -->
<circle cx="1682" cy="20" r="7.8" fill="#e8a150" stroke="#a8632a" stroke-width="0.6"/>
<ellipse cx="1681.8" cy="18.4" rx="4.4" ry="1.9" fill="#fbeedd"/>
<circle cx="1680.5" cy="18.4" r="0.7" fill="#1a1a2a"/>
<circle cx="1682.6" cy="18.4" r="0.7" fill="#1a1a2a"/>
<path d="M1679.1 22.2Q1682 26.4 1685 22.2Q1682 23.2 1679.1 22.2Z" fill="#4a1508"/><path d="M1680 22.6Q1682 23.4 1684.1 22.6L1683.8 23.3Q1682 23.9 1680.3 23.3Z" fill="#fff"/>
<circle cx="1678.5" cy="15.5" r="0.5" fill="#8a4a1a"/><circle cx="1686" cy="19.5" r="0.5" fill="#8a4a1a"/><circle cx="1678" cy="24" r="0.5" fill="#8a4a1a"/>
<!-- cookie -->
<path d="M1716.38 12.95A7.6 7.6 0 1 1 1711.34 17.26A4 4 0 0 0 1716.38 12.95Z" fill="#c88251" stroke="#3a2418" stroke-width="0.8"/>
<g fill="#111"><circle cx="1720" cy="16" r="1.3"/><circle cx="1716.4" cy="19.8" r="1.4"/><circle cx="1722" cy="20.6" r="1.3"/><circle cx="1715.4" cy="23.4" r="1.4"/><circle cx="1720.4" cy="24.2" r="1.3"/></g>
<!-- puzzle -->
<path d="M1749 13.8H1759.6Q1760.8 13.8 1760.8 15V25.4Q1760.8 26.6 1759.6 26.6H1749Q1747.8 26.6 1747.8 25.4V22.4A2.4 2.4 0 0 0 1747.8 17.6V15Q1747.8 13.8 1749 13.8Z" fill="none" stroke="#474747" stroke-width="1.6"/>
<path d="M1752.4 13.4A1.8 1.8 0 0 1 1756 13.4Z" fill="#474747"/>
<path d="M1761.2 18.3A1.7 1.7 0 0 1 1761.2 21.7Z" fill="#474747"/>
<rect x="1780" y="12" width="2" height="16" fill="#d3e3fd"/>
<!-- page search -->
<path d="M1805.6 26.2H1801V14.2H1809.6" fill="none" stroke="#474747" stroke-width="1.7"/>
<path d="M1809.3 13.3H1815A1.2 1.2 0 0 1 1816.2 14.5V17.5H1809.3Z" fill="#474747"/>
<circle cx="1811.6" cy="22.9" r="2.6" fill="none" stroke="#474747" stroke-width="1.6"/>
<path d="M1813.6 25L1816.4 27.8" stroke="#474747" stroke-width="1.7"/>
<rect x="1834" y="12" width="2" height="16" fill="#d3e3fd"/>
<!-- avatar T -->
<circle cx="1862" cy="20" r="10" fill="#0c5444"/>
<path d="M1858.4 15.8H1865.6M1862 15.8V24.6" stroke="#cfe3dc" stroke-width="1.9"/>
<g fill="#474747"><circle cx="1898" cy="14.4" r="1.5"/><circle cx="1898" cy="20" r="1.5"/><circle cx="1898" cy="25.6" r="1.5"/></g>

<!-- sidebar icons -->
<g fill="#bfcbd9">
 <!-- dashboard -->
 <path d="M22.1 78A7 7 0 1 1 31.9 78Z"/>
 <g fill="#304156"><ellipse cx="27" cy="68.5" rx="1" ry="0.8"/><ellipse cx="23.4" cy="70" rx="0.8" ry="1"/><ellipse cx="30.6" cy="70" rx="0.8" ry="1"/><ellipse cx="22" cy="73.4" rx="1" ry="0.8"/><ellipse cx="32" cy="73.4" rx="1" ry="0.8"/><circle cx="27" cy="75.2" r="1.3"/></g>
 <path d="M26.3 75L29 70.4L27.9 75.4Z" fill="#304156"/>
 <!-- person -->
 <circle cx="26.9" cy="124.4" r="3.7"/>
 <path d="M19.8 135A7.2 6.2 0 0 1 34.2 135Z"/>
 <!-- clipboard -->
 <rect x="21.3" y="235" width="13.4" height="14" rx="0.6"/>
 <rect x="25" y="233.8" width="6.2" height="3" rx="0.5" fill="#dfe6ee"/>
 <rect x="25.4" y="236.1" width="5.4" height="0.8" fill="#304156"/>
 <rect x="24" y="240" width="8" height="1.2" fill="#304156"/>
 <rect x="24" y="244.8" width="8" height="1.2" fill="#304156"/>
 <!-- person v -->
 <circle cx="28" cy="293.4" r="4"/>
 <path d="M20 305A8 7.4 0 0 1 36 305Z"/>
 <path d="M26.4 297.4L28 300.4L29.6 297.4Z" fill="#304156"/>
 <!-- chat dots -->
 <rect x="20" y="345" width="14" height="11" rx="1.6"/>
 <path d="M24.8 355.5L25.4 359.2L28.6 355.5Z"/>
 <g fill="#304156"><rect x="23" y="350.2" width="1.9" height="1.9"/><rect x="26" y="350.2" width="1.9" height="1.9"/><rect x="29.1" y="350.2" width="1.9" height="1.9"/></g>
 <!-- gear -->
 <path d="M34.47 631.00L36.40 631.00L36.40 635.00L34.47 635.00L32.97 637.60L33.93 639.27L30.47 641.27L29.50 639.60L26.50 639.60L25.53 641.27L22.07 639.27L23.03 637.60L21.53 635.00L19.60 635.00L19.60 631.00L21.53 631.00L23.03 628.40L22.07 626.73L25.53 624.73L26.50 626.40L29.50 626.40L30.47 624.73L33.93 626.73L32.97 628.40Z"/>
 <circle cx="28" cy="633" r="2.9" fill="#304156"/>
 <!-- lock -->
 <rect x="20" y="743" width="14" height="8.5" rx="0.4"/>
</g>
<g fill="none" stroke="#bfcbd9">
 <!-- chip -->
 <rect x="23" y="180.3" width="10.2" height="9.6" rx="1.2" stroke="#eef2f7" stroke-width="1.6"/>
 <path d="M24.7 176.8V180.3M27.5 176.8V180.3M30.3 176.8V180.3M24.7 189.9V193.3M27.5 189.9V193.3M30.3 189.9V193.3M19.4 182.5H23M19.4 185.3H23M19.4 188H23M33.2 182.5H36.6M33.2 185.3H36.6M33.2 188H36.6" stroke="#eef2f7" stroke-width="1.3"/>
 <!-- doc check -->
 <path d="M29.8 410V414.6H20.6V403.8L23.4 401.2H29.8V404.8" stroke-width="1.1"/>
 <path d="M23.4 401.2V404H20.6" stroke-width="1.1"/>
 <path d="M21.8 407.6H27M21.8 409.5H27M21.8 411.6H27.2" stroke-width="0.8"/>
 <circle cx="30.7" cy="408.7" r="3.3" stroke-width="1.1"/>
 <path d="M29.3 408.6L30.5 409.9L32.1 407.7" stroke-width="1"/>
 <!-- chat outline -->
 <path d="M21.2 472.6V461.6A2.2 2.2 0 0 1 23.4 459.4H33A2.2 2.2 0 0 1 35.2 461.6V467.2A2.2 2.2 0 0 1 33 469.4H24.2Z" stroke-width="1.8" stroke-linejoin="round"/>
 <!-- send -->
 <path d="M20.8 519.6L35.2 514.4L29.4 528.4L28.1 520.9Z" stroke-width="1.6" stroke-linejoin="round"/>
 <!-- link -->
 <g transform="rotate(-45 28 577)" stroke-width="1.6">
  <path d="M25.8 574.2H23.4A2.8 2.8 0 0 0 23.4 579.8H25.8"/>
  <path d="M30.2 574.2H32.6A2.8 2.8 0 0 1 32.6 579.8H30.2"/>
  <path d="M25.4 577H30.6"/>
 </g>
 <!-- share square -->
 <path d="M27.8 682.8H23.4A1.8 1.8 0 0 0 21.6 684.6V694A1.8 1.8 0 0 0 23.4 695.8H32.6A1.8 1.8 0 0 0 34.4 694V689.2" stroke-width="1.6"/>
 <circle cx="32.6" cy="684.7" r="2.9" stroke-width="1.5"/>
 <!-- lock shackle -->
 <path d="M23 743.6V741.4A4 4 0 0 1 31 741.4V743.6" stroke-width="1.8"/>
</g>

<!-- navbar hamburger -->
<g fill="#1a1a1a">
 <rect x="71" y="61.1" width="15.9" height="1.7"/>
 <rect x="77" y="65.2" width="9.8" height="1.6"/>
 <rect x="77" y="69.2" width="9.8" height="1.6"/>
 <rect x="71" y="73.2" width="15.9" height="1.7"/>
 <path d="M71.3 65.4L74.6 68L71.3 70.6Z"/>
</g>
<!-- navbar right -->
<g fill="none" stroke="#5a5e66">
 <circle cx="1732" cy="67" r="6.1" stroke-width="1.8"/>
 <path d="M1736.4 71.4L1742 77" stroke-width="2.2"/>
</g>
<g fill="#5a5e66">
 <path d="M1759 60H1764.6L1762.6 62L1765.8 65.2L1764.2 66.8L1761 63.6L1759 65.6Z"/>
 <path d="M1777 60H1771.4L1773.4 62L1770.2 65.2L1771.8 66.8L1775 63.6L1777 65.6Z"/>
 <path d="M1759 78H1764.6L1762.6 76L1765.8 72.8L1764.2 71.2L1761 74.4L1759 72.4Z"/>
 <path d="M1777 78H1771.4L1773.4 76L1770.2 72.8L1771.8 71.2L1775 74.4L1777 72.4Z"/>
 <rect x="1798" y="60" width="13" height="2.3"/>
 <rect x="1803.4" y="60" width="2.6" height="18"/>
 <rect x="1793" y="68" width="7.8" height="2"/>
 <rect x="1795.6" y="68" width="2.2" height="10"/>
 <path d="M1878 78H1884.4L1881.2 82Z"/>
</g>

<!-- input icons -->
<g fill="none" stroke="#c0c4cc" stroke-width="1">
 <circle cx="96.2" cy="131" r="6"/><path d="M96.2 127.6V131.4H99.2"/>
 <circle cx="301.2" cy="131" r="6"/><path d="M301.2 127.6V131.4H304.2"/>
 <path d="M666 129.2L671.4 134.6L676.8 129.2" stroke-width="1.1"/>
</g>
<!-- button icons -->
<g fill="none" stroke="#fff">
 <circle cx="521.6" cy="178.2" r="5.4" stroke-width="1.3"/>
 <path d="M525.4 182L527.8 184.4" stroke-width="1.4"/>
 <path d="M112.1 229.2L115.1 230.8L109.76 240.41L107.2 241.6L106.78 238.75Z" stroke-width="1.1" stroke-linejoin="round"/>
 <path d="M110.94 231.27L113.92 232.93" stroke-width="1"/>
 <path d="M112 241.3H118.2" stroke-width="1.1"/>
 <path d="M206.4 230V238.2M202.4 234.4L206.4 238.4L210.4 234.4M200.6 240.6H212.3" stroke-width="1.15"/>
</g>
<!-- floating gear -->
<g fill="none" stroke="#fff" stroke-width="1.5" stroke-linejoin="miter">
 <path d="M1889.04 315.95L1891.25 315.95L1891.25 320.25L1889.04 320.25L1886.93 323.90L1888.04 325.82L1884.31 327.97L1883.21 326.05L1878.99 326.05L1877.89 327.97L1874.16 325.82L1875.27 323.90L1873.16 320.25L1870.95 320.25L1870.95 315.95L1873.16 315.95L1875.27 312.30L1874.16 310.38L1877.89 308.23L1878.99 310.15L1883.21 310.15L1884.31 308.23L1888.04 310.38L1886.93 312.30Z"/>
 <circle cx="1881.1" cy="318.1" r="4.3" stroke-width="1.8"/>
</g>
<path d="M1905.5 56.5L1909.5 52L1913.5 56.5Z" fill="#5a5a5a"/>
<path d="M1905.5 984L1913.5 984L1909.5 988.5Z" fill="#5a5a5a"/>
</svg>

</body></html>
